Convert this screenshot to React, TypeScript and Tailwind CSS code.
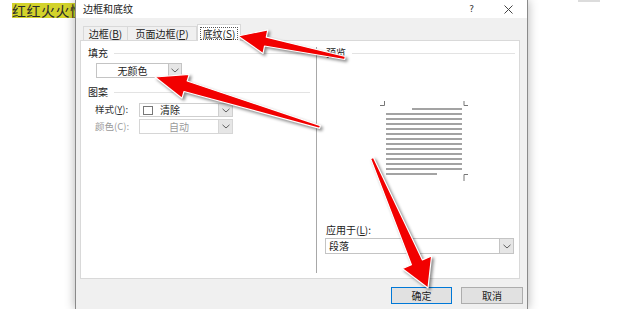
import React from "react";

type Pt = [number, number];

// red callout arrow, drawn from tail to tip
const arrowPoints = (
  tail: Pt,
  tip: Pt,
  headLen: number,
  headW: number,
  neckW: number,
  tailW: number
) => {
  const dx = tip[0] - tail[0];
  const dy = tip[1] - tail[1];
  const len = Math.sqrt(dx * dx + dy * dy);
  const ux = dx / len;
  const uy = dy / len;
  const nx = -uy;
  const ny = ux;
  const bx = tip[0] - ux * headLen;
  const by = tip[1] - uy * headLen;
  const pts: Pt[] = [
    [tail[0] + (nx * tailW) / 2, tail[1] + (ny * tailW) / 2],
    [bx + (nx * neckW) / 2, by + (ny * neckW) / 2],
    [bx + (nx * headW) / 2, by + (ny * headW) / 2],
    tip,
    [bx - (nx * headW) / 2, by - (ny * headW) / 2],
    [bx - (nx * neckW) / 2, by - (ny * neckW) / 2],
    [tail[0] - (nx * tailW) / 2, tail[1] - (ny * tailW) / 2],
  ];
  return pts.map((p) => p.map((v) => v.toFixed(1)).join(",")).join(" ");
};

const Chevron = ({ color = "#606060" }: { color?: string }) => (
  <svg width="8" height="5" viewBox="0 0 8 5">
    <path d="M0.5 0.8 L4 4 L7.5 0.8" fill="none" stroke={color} strokeWidth="1" />
  </svg>
);

const Heading = ({ label }: { label: string }) => (
  <div className="flex items-center h-[12px] gap-[6px]">
    <span className="text-[10px] leading-none text-[#222]">{label}</span>
    <div className="flex-1 h-px bg-[#e3e3e3]" />
  </div>
);

const Preview = () => {
  const rows = [];
  for (let i = 0; i < 12; i++) {
    rows.push(<rect key={i} x={8} y={12 + i * 5} width={76} height={2} fill="#a3a3a3" />);
  }
  return (
    <svg width="90" height="80" viewBox="0 0 90 80">
      <path d="M2 4.5 H6.5 V0" fill="none" stroke="#777" strokeWidth="1" />
      <path d="M86 0 V4.5 H90.5" fill="none" stroke="#777" strokeWidth="1" />
      <path d="M86 80 V73.5 H90.5" fill="none" stroke="#777" strokeWidth="1" />
      <rect x={34} y={7} width={50} height={2} fill="#a3a3a3" />
      {rows}
      <rect x={8} y={72} width={51} height={2} fill="#a3a3a3" />
    </svg>
  );
};

export default function App() {
  return (
    <div className="relative w-[620px] h-[309px] overflow-hidden bg-white flex font-['Noto_Sans_CJK_SC','Noto_Sans',sans-serif]">
      {/* document behind the dialog */}
      <div className="w-[75px] shrink-0 pt-[3px] pl-[12px]">
        <div className="w-[80px] h-[15px] bg-[#d3d32a] text-[14px] leading-[15px] tracking-[0.5px] text-[#2a2a2a] whitespace-nowrap">
          红红火火恍
        </div>
      </div>

      {/* dialog */}
      <div className="relative z-10 w-[453px] shrink-0 h-full flex flex-col border-x border-[#8a8a8a] bg-[#f0f0f0] shadow-[0_0_10px_rgba(0,0,0,0.3)]">
        <div className="h-[18px] bg-white flex items-center pl-[7px] pr-[14px]">
          <span className="text-[10px] leading-none text-[#222]">边框和底纹</span>
          <div className="flex-1" />
          <span className="text-[9px] leading-none text-[#333] font-['DejaVu_Sans',sans-serif] mr-[30px]">?</span>
          <svg width="9" height="9" viewBox="0 0 9 9">
            <path d="M0.5 0.5 L8.5 8.5 M8.5 0.5 L0.5 8.5" stroke="#444" strokeWidth="1" />
          </svg>
        </div>

        <div className="pl-[4px] pr-[7px] pt-[6px]">
          {/* tabs */}
          <div className="flex items-end h-[16px] pl-[3px] relative z-10">
            <div className="h-[14px] w-[45px] flex items-center justify-center border border-b-0 border-[#d9d9d9] bg-[#f0f0f0] text-[10px] leading-none text-[#222]">
              边框(<span className="underline">B</span>)
            </div>
            <div className="h-[14px] w-[69px] flex items-center justify-center border border-l-0 border-b-0 border-[#d9d9d9] bg-[#f0f0f0] text-[10px] leading-none text-[#222]">
              页面边框(<span className="underline">P</span>)
            </div>
            <div className="h-[17px] w-[44px] -mb-px flex items-center justify-center border border-b-0 border-[#d9d9d9] bg-white">
              <span className="px-[2px] border border-dotted border-[#555] text-[10px] leading-[11px] text-[#222]">
                底纹(<span className="underline">S</span>)
              </span>
            </div>
          </div>

          {/* panel */}
          <div className="h-[239px] bg-white border border-[#d9d9d9] flex">
            <div className="w-[235px] shrink-0 pt-[6px] pl-[7px] pr-[6px]">
              <Heading label="填充" />
              <div className="mt-[4px] ml-[8px] w-[86px] h-[15px] flex border border-[#c4c4c4]">
                <div className="flex-1 flex items-center justify-center text-[10px] leading-none text-[#222]">无颜色</div>
                <div className="w-[13px] flex items-center justify-center bg-[#e6e6e6] border-l border-[#c4c4c4]">
                  <Chevron />
                </div>
              </div>
              <div className="mt-[8px]">
                <Heading label="图案" />
              </div>
              <div className="mt-[5px] ml-[7px] flex items-center h-[14px]">
                <span className="w-[44px] text-[9.5px] leading-none text-[#333]">
                  样式(<span className="underline">Y</span>):
                </span>
                <div className="w-[94px] h-[14px] flex border border-[#cfcfcf]">
                  <div className="flex-1 flex items-center pl-[3px] gap-[7px]">
                    <div className="w-[10px] h-[9px] border border-[#777]" />
                    <span className="text-[10px] leading-none text-[#222]">清除</span>
                  </div>
                  <div className="w-[14px] flex items-center justify-center bg-[#e6e6e6] border-l border-[#cfcfcf]">
                    <Chevron />
                  </div>
                </div>
              </div>
              <div className="mt-[2px] ml-[7px] flex items-center h-[15px]">
                <span className="w-[44px] text-[9.5px] leading-none text-[#9a9a9a]">颜色(C):</span>
                <div className="w-[94px] h-[15px] flex border border-[#d6d6d6]">
                  <div className="flex-1 flex items-center justify-center text-[10px] leading-none text-[#9a9a9a]">自动</div>
                  <div className="w-[14px] flex items-center justify-center bg-[#e6e6e6] border-l border-[#d6d6d6]">
                    <Chevron />
                  </div>
                </div>
              </div>
            </div>

            <div className="flex-1 mt-[6px] mb-[5px] border-l border-[#a8a8a8] flex flex-col">
              <div className="pl-[9px] pr-[4px]">
                <Heading label="预览" />
              </div>
              <div className="mt-[42px] pl-[61px]">
                <Preview />
              </div>
              <div className="mt-[43px] pl-[9px] h-[12px] flex items-center text-[10px] leading-none text-[#222]">
                应用于(<span className="underline">L</span>):
              </div>
              <div className="mt-[2px] ml-[8px] w-[189px] h-[16px] flex border border-[#c4c4c4]">
                <div className="flex-1 flex items-center pl-[3px] text-[10px] leading-none text-[#222]">段落</div>
                <div className="w-[14px] flex items-center justify-center bg-[#e6e6e6] border-l border-[#c4c4c4]">
                  <Chevron />
                </div>
              </div>
            </div>
          </div>

          {/* buttons */}
          <div className="mt-[8px] flex justify-end gap-[9px] -mr-[3px]">
            <div className="w-[61px] h-[17px] flex items-center justify-center bg-[#e1e1e1] border border-[#0078d7] text-[10px] leading-none text-[#222]">
              确定
            </div>
            <div className="w-[62px] h-[17px] flex items-center justify-center bg-[#e1e1e1] border border-[#adadad] text-[10px] leading-none text-[#222]">
              取消
            </div>
          </div>
        </div>
      </div>

      {/* document on the right */}
      <div className="flex-1 pl-[50px]">
        <div className="w-[22px] h-[2px] bg-[#dcdcdc]" />
      </div>

      {/* red callout arrows */}
      <svg
        className="absolute inset-0 z-20 pointer-events-none drop-shadow-[2px_2px_1.5px_rgba(0,0,0,0.45)]"
        width="620"
        height="309"
        viewBox="0 0 620 309"
      >
        <polygon points={arrowPoints([345, 58], [238, 36], 28, 24, 9, 3)} fill="#f20000" stroke="#fff" strokeWidth="1.2" strokeLinejoin="round" />
        <polygon points={arrowPoints([320, 127], [155, 77], 32, 25, 11, 3)} fill="#f20000" stroke="#fff" strokeWidth="1.2" strokeLinejoin="round" />
        <polygon points={arrowPoints([372, 158], [428, 288], 28, 32, 12, 3)} fill="#f20000" stroke="#fff" strokeWidth="1.2" strokeLinejoin="round" />
      </svg>
    </div>
  );
}
